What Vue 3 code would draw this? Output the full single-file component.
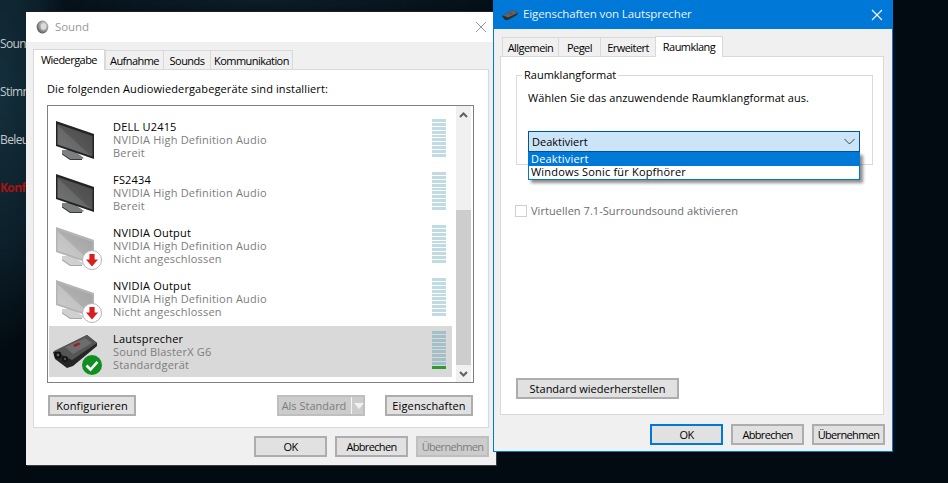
<script setup>
const devices = [
  { name: 'DELL U2415', sub: 'NVIDIA High Definition Audio', state: 'Bereit', kind: 'dark' },
  { name: 'FS2434', sub: 'NVIDIA High Definition Audio', state: 'Bereit', kind: 'dark' },
  { name: 'NVIDIA Output', sub: 'NVIDIA High Definition Audio', state: 'Nicht angeschlossen', kind: 'off' },
  { name: 'NVIDIA Output', sub: 'NVIDIA High Definition Audio', state: 'Nicht angeschlossen', kind: 'off' },
  { name: 'Lautsprecher', sub: 'Sound BlasterX G6', state: 'Standardgerät', kind: 'card', selected: true }
]
const segments = Array.from({ length: 10 }, (_, i) => i)
const bgLabels = [
  { text: 'Sound', red: false },
  { text: 'Stimme', red: false },
  { text: 'Beleuchtung', red: false },
  { text: 'Konfig', red: true }
]
</script>

<template>
  <div class="desktop">
    <div class="bg-menu">
      <div v-for="l in bgLabels" :key="l.text" class="bg-item" :class="{ red: l.red }">{{ l.text }}</div>
    </div>

    <section class="win sound">
      <header class="sound-title">
        <svg class="sound-icon" width="14" height="14" viewBox="0 0 14 14">
          <defs>
            <radialGradient id="spk" cx="0.6" cy="0.4" r="0.7">
              <stop offset="0" stop-color="#f2f2f2" />
              <stop offset="0.55" stop-color="#9a9a9a" />
              <stop offset="1" stop-color="#3c3c3c" />
            </radialGradient>
          </defs>
          <ellipse cx="6.5" cy="7" rx="5.8" ry="6.4" fill="url(#spk)" />
          <ellipse cx="7.5" cy="6.5" rx="2.6" ry="3.2" fill="#dcdcdc" />
        </svg>
        <span>Sound</span>
        <svg class="close" width="12" height="12" viewBox="0 0 12 12">
          <path d="M1 1 L11 11 M11 1 L1 11" stroke="#9a9a9a" stroke-width="1" fill="none" />
        </svg>
      </header>

      <div class="sound-body">
        <nav class="tabs sound-tabs">
          <span class="tab active">Wiedergabe</span>
          <span class="tab t-auf">Aufnahme</span>
          <span class="tab t-sou">Sounds</span>
          <span class="tab t-kom">Kommunikation</span>
        </nav>

        <div class="panel sound-panel">
          <p class="intro">Die folgenden Audiowiedergabegeräte sind installiert:</p>

          <div class="listbox">
            <div class="rows">
              <div v-for="(d, i) in devices" :key="i" class="row" :class="{ selected: d.selected }">
                <svg class="row-icon" width="56" height="51" viewBox="0 0 56 51">
                  <defs>
                    <linearGradient :id="'scr' + i" x1="0" y1="1" x2="1" y2="0">
                      <stop offset="0" :stop-color="d.kind === 'dark' ? '#787878' : '#d0d0d0'" />
                      <stop offset="0.47" :stop-color="d.kind === 'dark' ? '#686868' : '#c2c2c2'" />
                      <stop offset="0.5" :stop-color="d.kind === 'dark' ? '#565656' : '#aeaeae'" />
                      <stop offset="1" :stop-color="d.kind === 'dark' ? '#484848' : '#a0a0a0'" />
                    </linearGradient>
                  </defs>
                  <template v-if="d.kind !== 'card'">
                    <path d="M13 36 L24 36 L35 44 L33 45 L22 45 L13 39 Z" :fill="d.kind === 'dark' ? '#7b7f80' : '#d0d0d0'" />
                    <path d="M13 39 L22 45 L33 45 L33 46 L21 46 L13 40.5 Z" :fill="d.kind === 'dark' ? '#3a3a3a' : '#a8a8a8'" />
                    <path d="M7 7 L45 20 L45 45 L7 32 Z" :fill="d.kind === 'dark' ? '#232323' : '#b4b4b4'" />
                    <path d="M8.5 10 L43.5 22 L43.5 42.5 L8.5 30.5 Z" :fill="`url(#scr${i})`" />
                  </template>
                  <template v-else>
                    <path d="M4 26 L38 9 L48 17 L48 20 L24 40 L18 42 L6 33 Z" fill="#262626" />
                    <path d="M5 25 L38 9 L48 17 L23 34 Z" fill="#555" />
                    <path d="M16 21 L36 12 L43 17 L24 28 Z" fill="#6d6d6d" />
                    <path d="M24 19 L30 16.5 L31.5 18 L26 21 Z" fill="#a81818" />
                    <circle cx="9" cy="29" r="3.4" fill="#0f0f0f" />
                    <circle cx="16" cy="33" r="3" fill="#161616" />
                    <circle cx="9" cy="29" r="1.4" fill="#666" />
                    <circle cx="16" cy="33" r="1.2" fill="#555" />
                  </template>
                  <template v-if="d.kind === 'off'">
                    <circle cx="43" cy="40" r="9.5" fill="#fff" stroke="#b5b5b5" stroke-width="1" />
                    <path d="M40.4 34 H45.6 V39.5 H49 L43 46.5 L37 39.5 H40.4 Z" fill="#d81e1e" />
                  </template>
                  <template v-if="d.kind === 'card'">
                    <circle cx="43" cy="39" r="10" fill="#0f8f1f" />
                    <path d="M37.5 39.5 L41.5 43.5 L48.5 35.8" fill="none" stroke="#fff" stroke-width="2.6" />
                  </template>
                </svg>
                <div class="row-text">
                  <div class="row-name">{{ d.name }}</div>
                  <div class="row-sub">{{ d.sub }}</div>
                  <div class="row-sub">{{ d.state }}</div>
                </div>
                <div class="meter">
                  <i v-for="s in segments" :key="s" :class="{ on: d.selected && s === 9 }"></i>
                </div>
              </div>
            </div>
            <div class="scrollbar">
              <div class="sb-btn">
                <svg width="9" height="6" viewBox="0 0 9 6"><path d="M1 5 L4.5 1.5 L8 5" fill="none" stroke="#606060" stroke-width="2" /></svg>
              </div>
              <div class="sb-space"></div>
              <div class="sb-thumb"></div>
              <div class="sb-btn">
                <svg width="9" height="6" viewBox="0 0 9 6"><path d="M1 1 L4.5 4.5 L8 1" fill="none" stroke="#606060" stroke-width="2" /></svg>
              </div>
            </div>
          </div>

          <div class="sound-actions">
            <button class="btn w-konf">Konfigurieren</button>
            <span class="grow"></span>
            <div class="btn disabled split">
              <span class="split-label">Als Standard</span>
              <span class="split-arrow"></span>
            </div>
            <button class="btn w-eig">Eigenschaften</button>
          </div>
        </div>

        <footer class="foot sound-foot">
          <button class="btn w-ok">OK</button>
          <button class="btn w-ok">Abbrechen</button>
          <button class="btn w-ok disabled">Übernehmen</button>
        </footer>
      </div>
    </section>

    <section class="win props">
      <header class="props-title">
        <svg width="16" height="12" viewBox="0 0 16 12">
          <path d="M0 7 L11 1 L16 4 L15 6 L6 11 L3 11 Z" fill="#2c2c2c" />
          <path d="M1 6.5 L11 1 L15.5 4 L6 8.5 Z" fill="#5f6468" />
          <path d="M7 4.5 L9.5 3.5 L10.5 4.2 L8 5.5 Z" fill="#8a3030" />
        </svg>
        <span>Eigenschaften von Lautsprecher</span>
        <svg class="close" width="12" height="12" viewBox="0 0 12 12">
          <path d="M1 1 L11 11 M11 1 L1 11" stroke="#fff" stroke-width="1.1" fill="none" />
        </svg>
      </header>

      <div class="props-body">
        <nav class="tabs props-tabs">
          <span class="tab p-all">Allgemein</span>
          <span class="tab p-peg">Pegel</span>
          <span class="tab p-erw">Erweitert</span>
          <span class="tab active p-rau">Raumklang</span>
        </nav>

        <div class="panel props-panel">
          <fieldset class="group">
            <legend>Raumklangformat</legend>
            <p class="group-text">Wählen Sie das anzuwendende Raumklangformat aus.</p>
            <div class="combo">
              <span>Deaktiviert</span>
              <svg width="11" height="7" viewBox="0 0 11 7"><path d="M0.5 1 L5.5 6 L10.5 1" fill="none" stroke="#444" stroke-width="1" /></svg>
              <div class="dropdown">
                <div class="opt on">Deaktiviert</div>
                <div class="opt">Windows Sonic für Kopfhörer</div>
              </div>
            </div>
          </fieldset>

          <label class="check">
            <span class="box"></span>
            <span>Virtuellen 7.1-Surroundsound aktivieren</span>
          </label>

          <span class="grow"></span>
          <button class="btn w-std">Standard wiederherstellen</button>
        </div>

        <footer class="foot props-foot">
          <button class="btn w-ok primary">OK</button>
          <button class="btn w-ok">Abbrechen</button>
          <button class="btn w-ok">Übernehmen</button>
        </footer>
      </div>
    </section>
  </div>
</template>

<style scoped>
.desktop {
  position: relative;
  width: 948px;
  height: 483px;
  overflow: hidden;
  font-family: "Open Sans", "Noto Sans", sans-serif;
  font-size: 11px;
  letter-spacing: 0.12px;
  color: #000;
  background:
    radial-gradient(ellipse 70px 260px at 0 90px, #14303c 0%, rgba(16, 40, 52, 0.7) 60%, rgba(6, 18, 26, 0) 100%),
    radial-gradient(ellipse 300px 24px at 260px 0, #0c1e29 0%, rgba(10, 26, 36, 0) 100%),
    #030b12;
}
.bg-menu {
  display: flex;
  flex-direction: column;
  padding-top: 35px;
  color: #c3c9cc;
  font-size: 12px;
  letter-spacing: -0.6px;
}
.bg-item { height: 48px; line-height: 18px; white-space: nowrap; }
.bg-item.red { color: #a81212; font-weight: 700; }

.win { position: absolute; display: flex; flex-direction: column; box-sizing: border-box; }
.sound {
  left: 26px; top: 11px; width: 470px; height: 454px;
  border-top: 1px solid #1d2124;
  background: #f0f0f0;
  box-shadow: 1px 1px 0 #3a3a3a;
}
.sound-title {
  height: 30px; flex: none;
  display: flex; align-items: center;
  padding: 0 8px 0 10px;
  background: #fff;
  color: #999;
  font-size: 11.5px;
  letter-spacing: -0.1px;
}
.sound-title span, .props-title span { position: relative; top: -1px; }
.sound-icon { margin-right: 5px; }
.close { margin-left: auto; }
.sound-title .close { margin-right: 1px; }

.sound-body, .props-body { flex: 1; display: flex; flex-direction: column; min-height: 0; }
.sound-body { padding: 7px 7px 8px 7px; }

.tabs { display: flex; align-items: flex-end; flex: none; position: relative; z-index: 1; }
.tab {
  box-sizing: border-box;
  height: 19px;
  display: flex; align-items: center; justify-content: center;
  background: #f0f0f0;
  border: 1px solid #d9d9d9;
  border-bottom: none;
  margin-left: -1px;
  white-space: nowrap;
  letter-spacing: -0.55px;
}
.tab.active {
  height: 21px; background: #fff; margin-bottom: -1px; margin-left: 0;
  padding-bottom: 2px;
}
.sound-tabs .tab.active { width: 72px; }
.t-auf { width: 59px; margin-left: 0; }
.t-sou { width: 48px; }
.t-kom { width: 83px; }
.sound-tabs { height: 20px; }

.panel {
  flex: 1;
  box-sizing: border-box;
  background: #fff;
  border: 1px solid #d9d9d9;
  display: flex; flex-direction: column;
  min-height: 0;
}
.sound-panel { padding: 11px 13px 10px 13px; height: 359px; flex: none; }
.intro { margin: 0 0 9px 0; line-height: 15px; height: 15px; font-size: 11px; letter-spacing: 0.12px; }

.listbox {
  box-sizing: border-box;
  width: 427px; height: 278px;
  border: 1px solid #7f7f87;
  display: flex;
  padding: 0 1px 0 1px;
}
.rows { flex: none; width: 403px; padding-top: 8px; display: flex; flex-direction: column; gap: 2px; }
.row {
  height: 51px; flex: none;
  display: flex; position: relative;
}
.row.selected { background: #d9d9d9; }
.row-icon { flex: none; margin-right: 8px; }
.row-text { padding-top: 6px; flex: 1; white-space: nowrap; }
.row-name, .row-sub { height: 13px; line-height: 13px; letter-spacing: 0.2px; }
.row-sub { color: #7d7d7d; }
.meter {
  width: 14px; margin: 5px 6px 0 0;
  display: flex; flex-direction: column; gap: 1px;
}
.meter i { display: block; height: 2.9px; background: #c1dbe2; }
.row.selected .meter i { background: #a3c0c9; }
.row.selected .meter i.on { background: #2f9a35; }

.scrollbar {
  margin: 0 0 0 4px; width: 15px; flex: none;
  display: flex; flex-direction: column;
  background: #f0f0f0;
}
.sb-btn { height: 17px; flex: none; display: flex; align-items: center; justify-content: center; }
.sb-space { height: 87px; flex: none; }
.sb-thumb { flex: 1; background: #cdcdcd; }

.sound-actions { display: flex; margin-top: 12px; margin-left: 1px; margin-right: 2px; }
.grow { flex: 1; }
.btn {
  box-sizing: border-box;
  height: 21px;
  display: flex; align-items: center; justify-content: center;
  background: #e1e1e1;
  border: 2px solid #adadad;
  font: inherit;
  letter-spacing: inherit;
  color: #000;
  padding: 0;
  white-space: nowrap;
}
.btn.disabled { background: #ccc; border-color: #bfbfbf; color: #7c7c7c; }
.btn.primary { border-color: #0078d7; }
.w-konf { width: 88px; }
.w-eig { width: 88px; margin-left: 20px; }
.w-ok { width: 73px; letter-spacing: -0.65px; }
.w-std { width: 163px; flex: none; letter-spacing: 0; }
.split { width: 88px; justify-content: flex-start; }
.split-label { width: 70px; text-align: center; flex: none; letter-spacing: 0; }
.split-arrow {
  align-self: stretch; flex: none; width: 14px; margin-left: 2px; position: relative;
  border-left: 1px solid #f4f4f4;
}
.split-arrow::after {
  content: "";
  position: absolute; left: 2px; top: 6px;
  border-left: 5px solid transparent; border-right: 5px solid transparent;
  border-top: 6px solid #f2f2f2;
}

.foot { display: flex; justify-content: flex-end; gap: 8px; flex: none; }
.sound-foot { margin-top: 8px; }

.props {
  left: 493px; top: 0; width: 400px; height: 452px;
  border: 1px solid #0078d7;
  border-top: none;
  background: #f0f0f0;
}
.props-title {
  height: 29px; flex: none;
  display: flex; align-items: center;
  background: #0078d7;
  color: #eaf4fc;
  font-size: 11.5px;
  letter-spacing: -0.1px;
  padding: 0 10px 0 9px;
  margin: 0 -1px;
}
.props-title svg:first-child { margin-right: 5px; }
.props-body { padding: 7px 8px 0 6px; }
.props-tabs { height: 20px; padding-left: 3px; }
.p-all { width: 57px; }
.p-peg { width: 43px; }
.p-erw { width: 56px; }
.p-rau { width: 68px; }
.props-tabs .tab.active { margin-left: -1px; }
.props-panel { flex: none; height: 359px; padding: 11px 11px 15px 15px; }
.group {
  margin: 0; padding: 0 11px 0 11px;
  width: 357px; height: 97px;
  box-sizing: border-box;
  border: 1px solid #d9d9d9;
  min-inline-size: 0;
}
.group legend { padding: 0 2px; margin-left: -6px; line-height: 14px; letter-spacing: 0; }
.group-text { margin: 8px 0 0 0; line-height: 15px; letter-spacing: 0.06px; }
.combo {
  position: relative;
  box-sizing: border-box;
  margin-top: 26px;
  width: 332px; height: 21px;
  background: #cce4f7;
  border: 1px solid #005499;
  display: flex; align-items: center; justify-content: space-between;
  padding: 0 4px 0 3px;
  z-index: 2;
  letter-spacing: 0;
}
.dropdown {
  position: absolute;
  left: -1px; top: 20px;
  width: 332px;
  box-sizing: border-box;
  background: #fff;
  border: 1px solid #0078d7;
  border-top: none;
  box-shadow: 3px 3px 3px rgba(0, 0, 0, 0.45);
  letter-spacing: 0.18px;
}
.opt { height: 13px; line-height: 12px; padding-left: 2px; }
.opt.on { background: #0078d7; color: #fff; height: 14px; line-height: 14px; }
.check {
  display: flex; align-items: center; gap: 4px;
  margin-top: 39px; margin-left: -1px;
  color: #6d6d6d;
  letter-spacing: 0.05px;
  height: 13px;
}
.box { width: 12px; height: 12px; box-sizing: border-box; border: 1px solid #cfcfcf; background: #fff; flex: none; }
.props-foot { margin-top: 9px; margin-right: -1px; }
</style>

<style>
html, body { margin: 0; padding: 0; background: #030b12; }
</style>
